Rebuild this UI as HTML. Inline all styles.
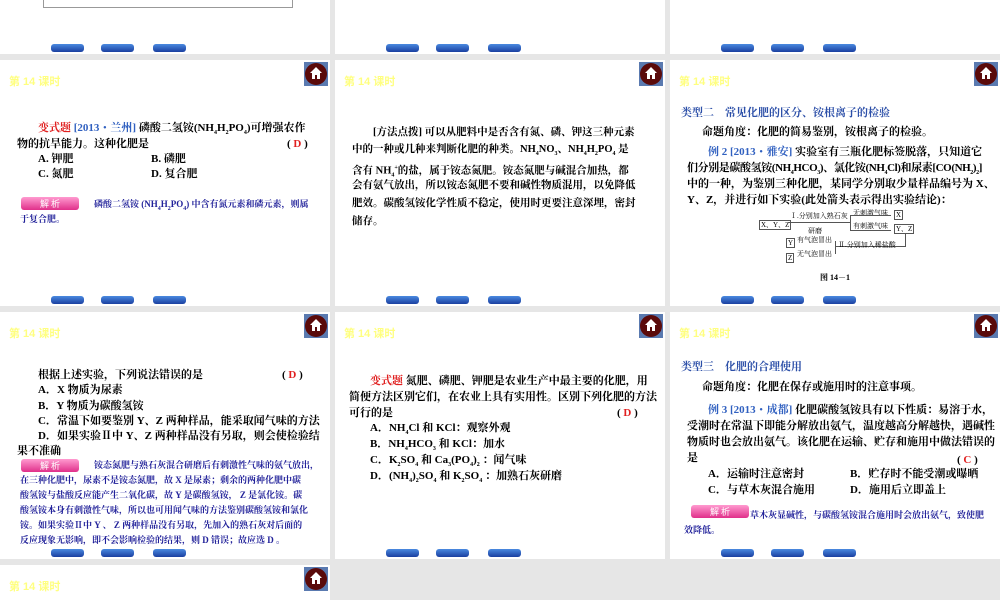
<!DOCTYPE html>
<html><head><meta charset="utf-8"><style>
body{margin:0;width:1000px;height:600px;background:#e6e6e6;position:relative;overflow:hidden;font-family:"Liberation Serif","Noto Serif CJK SC",serif;color:#000}
.s{position:absolute;background:#fff;overflow:hidden}
.h{position:absolute;left:9px;top:13px;font:bold 11px "Liberation Sans","Noto Sans CJK SC",sans-serif;color:#ffff80}
.home{position:absolute;left:304px;top:2px;width:24px;height:24px;background:#5a7ab0}
.home:before{content:"";position:absolute;left:1px;top:1px;width:22px;height:22px;border-radius:50%;background:#5a0a0a}
.home svg{position:absolute;left:5px;top:4px}
.nav{position:absolute;top:0;height:8px;width:33px;background:linear-gradient(#4a8ae0,#1a3fa0);border-radius:3px}
.t{position:absolute;font-size:11px;line-height:16px;white-space:nowrap;font-weight:bold}
.a{position:absolute;font-size:9px;line-height:15px;white-space:nowrap;color:#22229a;font-weight:bold}
.red{color:#e02020}.blue{color:#3060c0}
.tag{position:absolute;width:58px;height:13px;background:linear-gradient(#ff9ad0,#e0308a);border-radius:3px;color:#fff;font:9px "Noto Sans CJK SC",sans-serif;text-align:center;line-height:13px}
sub{font-size:6px}
.d{position:absolute;font-size:7px;white-space:nowrap}
.bx{position:absolute;border:1px solid #555;font-size:7px;line-height:8px;padding:0 1px}
</style></head><body>
<!-- row1 partial -->
<div class="s" style="left:0;top:0;width:330px;height:54px">
<div style="position:absolute;left:43px;top:-4px;width:248px;height:10px;border:1px solid #999"></div>
<div class="nav" style="left:51px;top:44px"></div><div class="nav" style="left:101px;top:44px"></div><div class="nav" style="left:153px;top:44px"></div></div>
<div class="s" style="left:335px;top:0;width:330px;height:54px"><div class="nav" style="left:51px;top:44px"></div><div class="nav" style="left:101px;top:44px"></div><div class="nav" style="left:153px;top:44px"></div></div>
<div class="s" style="left:670px;top:0;width:330px;height:54px"><div class="nav" style="left:51px;top:44px"></div><div class="nav" style="left:101px;top:44px"></div><div class="nav" style="left:153px;top:44px"></div></div>

<!-- row2 -->
<div class="s" style="left:0;top:60px;width:330px;height:246px">
<div class="h">第 14 课时</div><div class="home"><svg width="14" height="14" viewBox="0 0 14 14"><path d="M7 1L1 7h2v6h3V9h2v4h3V7h2z" fill="#fff"/></svg></div>
<div class="t" style="left:38px;top:60px"><span class="red">变式题</span> <span class="blue">[2013・兰州]</span> 磷酸二氢铵(NH<sub>4</sub>H<sub>2</sub>PO<sub>4</sub>)可增强农作</div>
<div class="t" style="left:17px;top:76px">物的抗旱能力。这种化肥是</div>
<div class="t" style="left:287px;top:76px">( <span class="red">D</span> )</div>
<div class="t" style="left:38px;top:91px">A. 钾肥</div><div class="t" style="left:151px;top:91px">B. 磷肥</div>
<div class="t" style="left:38px;top:106px">C. 氮肥</div><div class="t" style="left:151px;top:106px">D. 复合肥</div>
<div class="tag" style="left:21px;top:137px">解 析</div>
<div class="a" style="left:94px;top:137px">磷酸二氢铵 (NH<sub>4</sub>H<sub>2</sub>PO<sub>4</sub>) 中含有氮元素和磷元素，则属</div>
<div class="a" style="left:20px;top:152px">于复合肥。</div>
<div class="nav" style="left:51px;top:236px"></div><div class="nav" style="left:101px;top:236px"></div><div class="nav" style="left:153px;top:236px"></div></div>

<div class="s" style="left:335px;top:60px;width:330px;height:246px">
<div class="h">第 14 课时</div><div class="home"><svg width="14" height="14" viewBox="0 0 14 14"><path d="M7 1L1 7h2v6h3V9h2v4h3V7h2z" fill="#fff"/></svg></div>
<div class="t" style="left:38px;top:65px;font-size:10.5px">[方法点拨] 可以从肥料中是否含有氮、磷、钾这三种元素</div>
<div class="t" style="left:17px;top:82px;font-size:10.5px">中的一种或几种来判断化肥的种类。NH<sub>4</sub>NO<sub>3</sub>、NH<sub>4</sub>H<sub>2</sub>PO<sub>4</sub> 是</div>
<div class="t" style="left:17px;top:100px;font-size:10.5px">含有 NH<sub>4</sub><sup style="font-size:6px">+</sup>的盐，属于铵态氮肥。铵态氮肥与碱混合加热，都</div>
<div class="t" style="left:17px;top:118px;font-size:10.5px">会有氨气放出，所以铵态氮肥不要和碱性物质混用，以免降低</div>
<div class="t" style="left:17px;top:136px;font-size:10.5px">肥效。碳酸氢铵化学性质不稳定，使用时更要注意深埋，密封</div>
<div class="t" style="left:17px;top:154px;font-size:10.5px">储存。</div>
<div class="nav" style="left:51px;top:236px"></div><div class="nav" style="left:101px;top:236px"></div><div class="nav" style="left:153px;top:236px"></div></div>

<div class="s" style="left:670px;top:60px;width:330px;height:246px">
<div class="h">第 14 课时</div><div class="home"><svg width="14" height="14" viewBox="0 0 14 14"><path d="M7 1L1 7h2v6h3V9h2v4h3V7h2z" fill="#fff"/></svg></div>
<div class="t" style="left:11px;top:45px;color:#2c4fa8">类型二　常见化肥的区分、铵根离子的检验</div>
<div class="t" style="left:32px;top:64px">命题角度：化肥的简易鉴别，铵根离子的检验。</div>
<div class="t" style="left:38px;top:84px"><span class="blue">例 2 [2013・雅安]</span> 实验室有三瓶化肥标签脱落，只知道它</div>
<div class="t" style="left:17px;top:100px;letter-spacing:-0.4px">们分别是碳酸氢铵(NH<sub>4</sub>HCO<sub>3</sub>)、氯化铵(NH<sub>4</sub>Cl)和尿素[CO(NH<sub>2</sub>)<sub>2</sub>]</div>
<div class="t" style="left:17px;top:116px">中的一种，为鉴别三种化肥，某同学分别取少量样品编号为 X、</div>
<div class="t" style="left:17px;top:132px">Y、Z，并进行如下实验(此处箭头表示得出实验结论)：</div>
<div class="bx" style="left:89px;top:160px">X、Y、Z</div>
<div class="d" style="left:120px;top:151px">Ⅰ.分别加入熟石灰</div><div class="d" style="left:138px;top:166px">研磨</div>
<div class="d" style="left:183px;top:148px">无刺激气味</div><div class="bx" style="left:224px;top:150px">X</div>
<div class="d" style="left:183px;top:161px">有刺激气味</div><div class="bx" style="left:224px;top:164px">Y、Z</div>
<div style="position:absolute;left:118px;top:162px;width:62px;border-top:1px solid #555"></div>
<div style="position:absolute;left:180px;top:155px;height:14px;width:40px;border-left:1px solid #555;border-top:1px solid #555;border-bottom:1px solid #555"></div>
<div style="position:absolute;left:165px;top:174px;width:70px;height:12px;border-right:1px solid #555;border-bottom:1px solid #555"></div>
<div class="d" style="left:168px;top:180px">Ⅱ.分别加入稀盐酸</div>
<div class="bx" style="left:116px;top:178px">Y</div><div class="d" style="left:127px;top:175px">有气泡冒出</div>
<div class="bx" style="left:116px;top:193px">Z</div><div class="d" style="left:127px;top:189px">无气泡冒出</div>
<div style="position:absolute;left:165px;top:181px;height:13px;border-left:1px solid #555"></div>
<div class="d" style="left:150px;top:212px;font-weight:bold;font-size:8px">图 14－1</div>
<div class="nav" style="left:51px;top:236px"></div><div class="nav" style="left:101px;top:236px"></div><div class="nav" style="left:153px;top:236px"></div></div>

<!-- row3 -->
<div class="s" style="left:0;top:312px;width:330px;height:247px">
<div class="h">第 14 课时</div><div class="home"><svg width="14" height="14" viewBox="0 0 14 14"><path d="M7 1L1 7h2v6h3V9h2v4h3V7h2z" fill="#fff"/></svg></div>
<div class="t" style="left:38px;top:55px">根据上述实验，下列说法错误的是</div><div class="t" style="left:282px;top:55px">( <span class="red">D</span> )</div>
<div class="t" style="left:38px;top:70px">A．X 物质为尿素</div>
<div class="t" style="left:38px;top:86px">B．Y 物质为碳酸氢铵</div>
<div class="t" style="left:38px;top:101px">C．常温下如要鉴别 Y、Z 两种样品，能采取闻气味的方法</div>
<div class="t" style="left:38px;top:116px">D．如果实验Ⅱ中 Y、Z 两种样品没有另取，则会使检验结</div>
<div class="t" style="left:17px;top:131px">果不准确</div>
<div class="tag" style="left:21px;top:147px">解 析</div>
<div class="a" style="left:94px;top:146px">铵态氮肥与熟石灰混合研磨后有刺激性气味的氨气放出，</div>
<div class="a" style="left:20px;top:161px">在三种化肥中，尿素不是铵态氮肥，故 X 是尿素；剩余的两种化肥中碳</div>
<div class="a" style="left:20px;top:176px">酸氢铵与盐酸反应能产生二氧化碳，故 Y 是碳酸氢铵， Z 是氯化铵。碳</div>
<div class="a" style="left:20px;top:191px">酸氢铵本身有刺激性气味，所以也可用闻气味的方法鉴别碳酸氢铵和氯化</div>
<div class="a" style="left:20px;top:206px">铵。如果实验Ⅱ中 Y 、 Z 两种样品没有另取，先加入的熟石灰对后面的</div>
<div class="a" style="left:20px;top:221px">反应现象无影响，即不会影响检验的结果，则 D 错误；故应选 D 。</div>
<div class="nav" style="left:51px;top:237px"></div><div class="nav" style="left:101px;top:237px"></div><div class="nav" style="left:153px;top:237px"></div></div>

<div class="s" style="left:335px;top:312px;width:330px;height:247px">
<div class="h">第 14 课时</div><div class="home"><svg width="14" height="14" viewBox="0 0 14 14"><path d="M7 1L1 7h2v6h3V9h2v4h3V7h2z" fill="#fff"/></svg></div>
<div class="t" style="left:35px;top:61px"><span class="red">变式题</span> 氮肥、磷肥、钾肥是农业生产中最主要的化肥，用</div>
<div class="t" style="left:14px;top:77px">简便方法区别它们，在农业上具有实用性。区别下列化肥的方法</div>
<div class="t" style="left:14px;top:93px">可行的是</div><div class="t" style="left:282px;top:93px">( <span class="red">D</span> )</div>
<div class="t" style="left:35px;top:108px">A．NH<sub>4</sub>Cl 和 KCl：观察外观</div>
<div class="t" style="left:35px;top:124px">B．NH<sub>4</sub>HCO<sub>3</sub> 和 KCl：加水</div>
<div class="t" style="left:35px;top:140px">C．K<sub>2</sub>SO<sub>4</sub> 和 Ca<sub>3</sub>(PO<sub>4</sub>)<sub>2</sub> ：闻气味</div>
<div class="t" style="left:35px;top:156px">D．(NH<sub>4</sub>)<sub>2</sub>SO<sub>4</sub> 和 K<sub>2</sub>SO<sub>4</sub> ：加熟石灰研磨</div>
<div class="nav" style="left:51px;top:237px"></div><div class="nav" style="left:101px;top:237px"></div><div class="nav" style="left:153px;top:237px"></div></div>

<div class="s" style="left:670px;top:312px;width:330px;height:247px">
<div class="h">第 14 课时</div><div class="home"><svg width="14" height="14" viewBox="0 0 14 14"><path d="M7 1L1 7h2v6h3V9h2v4h3V7h2z" fill="#fff"/></svg></div>
<div class="t" style="left:11px;top:47px;color:#2c4fa8">类型三　化肥的合理使用</div>
<div class="t" style="left:32px;top:67px">命题角度：化肥在保存或施用时的注意事项。</div>
<div class="t" style="left:38px;top:90px"><span class="blue">例 3 [2013・成都]</span> 化肥碳酸氢铵具有以下性质：易溶于水，</div>
<div class="t" style="left:17px;top:106px">受潮时在常温下即能分解放出氨气，温度越高分解越快，遇碱性</div>
<div class="t" style="left:17px;top:122px">物质时也会放出氨气。该化肥在运输、贮存和施用中做法错误的</div>
<div class="t" style="left:17px;top:138px">是</div><div class="t" style="left:287px;top:140px">( <span class="red">C</span> )</div>
<div class="t" style="left:38px;top:154px">A．运输时注意密封</div><div class="t" style="left:180px;top:154px">B．贮存时不能受潮或曝晒</div>
<div class="t" style="left:38px;top:170px">C．与草木灰混合施用</div><div class="t" style="left:180px;top:170px">D．施用后立即盖上</div>
<div class="tag" style="left:21px;top:193px">解 析</div>
<div class="a" style="left:80px;top:196px">草木灰显碱性，与碳酸氢铵混合施用时会放出氨气，致使肥</div>
<div class="a" style="left:14px;top:211px">效降低。</div>
<div class="nav" style="left:51px;top:237px"></div><div class="nav" style="left:101px;top:237px"></div><div class="nav" style="left:153px;top:237px"></div></div>

<!-- row4 -->
<div class="s" style="left:0;top:565px;width:330px;height:35px">
<div class="h">第 14 课时</div><div class="home"><svg width="14" height="14" viewBox="0 0 14 14"><path d="M7 1L1 7h2v6h3V9h2v4h3V7h2z" fill="#fff"/></svg></div></div>
</body></html>
